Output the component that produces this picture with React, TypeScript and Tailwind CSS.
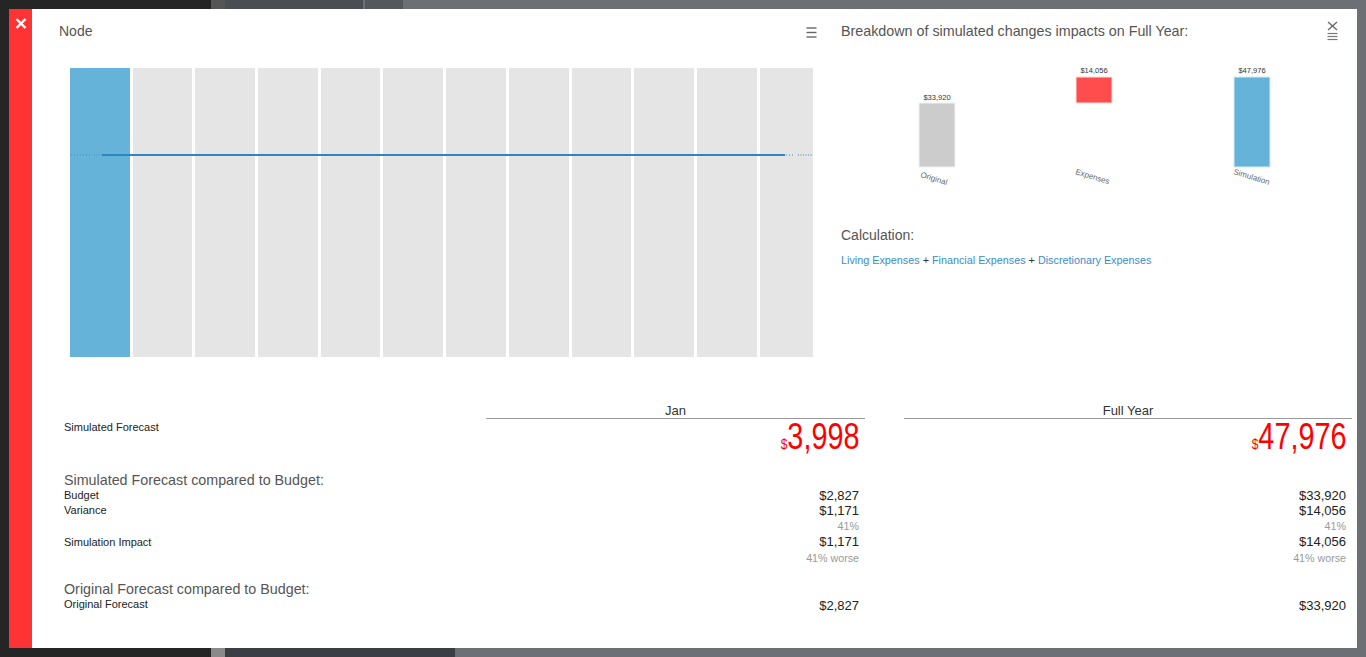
import React from "react";

function Hamburger() {
  return (
    <svg width="11" height="11" viewBox="0 0 11 11">
      <line x1="0.5" y1="1" x2="10.5" y2="1" stroke="#666" strokeWidth="1.4" />
      <line x1="0.5" y1="5.5" x2="10.5" y2="5.5" stroke="#666" strokeWidth="1.4" />
      <line x1="0.5" y1="10" x2="10.5" y2="10" stroke="#666" strokeWidth="1.4" />
    </svg>
  );
}

function NodeChart() {
  const cols = Array.from({ length: 12 }, (_, i) => i);
  return (
    <div className="relative w-[743px] h-[289px] overflow-hidden flex gap-[3px]">
      {cols.map((i) => (
        <div
          key={i}
          className={
            i === 0
              ? "flex-none w-[59.7px] h-full bg-[#66b3d9]"
              : "flex-none w-[59.7px] h-full bg-[#e5e5e5]"
          }
        />
      ))}
      <svg className="absolute inset-0" width="743" height="289" viewBox="0 0 743 289">
        <line x1="1" y1="87" x2="20" y2="87" stroke="#3a8cc2" strokeWidth="1.2" strokeDasharray="1 2" />
        <line x1="24" y1="87" x2="32" y2="87" stroke="#3a8cc2" strokeWidth="1.2" strokeDasharray="1 1.5" />
        <line x1="32" y1="87" x2="715" y2="87" stroke="#2f86bf" strokeWidth="2" />
        <line x1="716" y1="87" x2="724" y2="87" stroke="#3a8cc2" strokeWidth="1.2" strokeDasharray="1 2" />
        <line x1="728" y1="87" x2="743" y2="87" stroke="#3a8cc2" strokeWidth="1.2" strokeDasharray="1 1.5" />
      </svg>
    </div>
  );
}

function BreakdownChart() {
  return (
    <svg width="515" height="135" viewBox="0 0 515 135" className="block">
      <rect x="78" y="48" width="36" height="64" fill="#cccccc" stroke="#f2f2f2" strokeWidth="1" />
      <rect x="235" y="22" width="36" height="26" fill="#ff4d4d" stroke="#fde0e0" strokeWidth="1" />
      <rect x="393" y="22" width="36" height="90" fill="#66b3d9" stroke="#d6ecf6" strokeWidth="1" />
      <g fontFamily="Liberation Sans, Arial, sans-serif" fontSize="7.5" fill="#333" textAnchor="middle">
        <text x="96" y="44.5">$33,920</text>
        <text x="253" y="18">$14,056</text>
        <text x="411" y="18">$47,976</text>
      </g>
      <g fontFamily="Liberation Sans, Arial, sans-serif" fontSize="8" fill="#666">
        <text x="79" y="122" transform="rotate(17 79 122)">Original</text>
        <text x="234" y="119" transform="rotate(17 234 119)">Expenses</text>
        <text x="392" y="119" transform="rotate(17 392 119)">Simulation</text>
      </g>
    </svg>
  );
}

function Row({
  label,
  jan,
  fy,
  h,
  labelClass,
  valueClass,
}: {
  label?: string;
  jan: string;
  fy: string;
  h: string;
  labelClass: string;
  valueClass: string;
}) {
  return (
    <div className={`flex ${h}`}>
      <div className={`w-[422px] flex-none ${labelClass}`}>{label}</div>
      <div className={`w-[379px] flex-none text-right pr-[6px] ${valueClass}`}>{jan}</div>
      <div className="w-[39px] flex-none" />
      <div className={`w-[448px] flex-none text-right pr-[6px] ${valueClass}`}>{fy}</div>
    </div>
  );
}

function BigNumber({ value }: { value: string }) {
  return (
    <span className="inline-block origin-right scale-x-[0.8] text-[#ff0000]">
      <span className="text-[15px]">$</span>
      <span>{value}</span>
    </span>
  );
}

export default function App() {
  return (
    <div className="relative w-[1366px] h-[657px] overflow-hidden bg-[#6c7074] font-['Liberation_Sans',Arial,sans-serif]">
      {/* background app */}
      <div className="flex h-full">
        <div className="w-[211px] h-full bg-[#252525] flex-none" />
        <div className="w-[14px] h-full flex-none flex flex-col">
          <div className="h-[9px] bg-[#555]" />
          <div className="flex-1 bg-[#4e4e4e]" />
          <div className="h-[10px] bg-[#8a8a8a]" />
        </div>
        <div className="flex-1 h-full flex flex-col">
          <div className="h-[9px] flex">
            <div className="w-[138px] bg-[#4a4e52]" />
            <div className="w-[2px]" />
            <div className="w-[38px] bg-[#54585c]" />
          </div>
          <div className="flex-1" />
          <div className="h-[10px] flex">
            <div className="w-[230px] bg-[#3b3f43]" />
          </div>
        </div>
      </div>

      {/* modal */}
      <div className="absolute left-[9px] top-[9px] w-[1348px] h-[639px] flex">
        <div className="w-[23px] flex-none bg-[#ff3333] flex justify-center pt-[9px]">
          <svg width="12" height="11" viewBox="0 0 12 11">
            <line x1="1.5" y1="1" x2="10.5" y2="10" stroke="#fff" strokeWidth="2.4" />
            <line x1="10.5" y1="1" x2="1.5" y2="10" stroke="#fff" strokeWidth="2.4" />
          </svg>
        </div>
        <div className="relative flex-1 bg-white flex flex-col">
          {/* close + menu top right */}
          <div className="absolute left-[1295px] top-[12px] flex flex-col items-center">
            <svg width="11" height="10" viewBox="0 0 11 10">
              <line x1="1" y1="1" x2="10" y2="9" stroke="#666" strokeWidth="1.3" />
              <line x1="10" y1="1" x2="1" y2="9" stroke="#666" strokeWidth="1.3" />
            </svg>
            <svg width="11" height="9" viewBox="0 0 11 9" className="mt-[1px]">
              <line x1="0.5" y1="1.5" x2="10.5" y2="1.5" stroke="#777" strokeWidth="1.2" />
              <line x1="0.5" y1="4.5" x2="10.5" y2="4.5" stroke="#777" strokeWidth="1.2" />
              <line x1="0.5" y1="7.5" x2="10.5" y2="7.5" stroke="#777" strokeWidth="1.2" />
            </svg>
          </div>

          {/* top section */}
          <div className="flex h-[394px] flex-none">
            <div className="w-[790px] flex-none flex flex-col">
              <div className="flex items-center justify-between pl-[27px] pr-[5px] pt-[13px]">
                <span className="text-[14px] leading-[18px] text-[#555]">Node</span>
                <div className="mt-[3px]">
                  <Hamburger />
                </div>
              </div>
              <div className="ml-[38px] mt-[28px]">
                <NodeChart />
              </div>
            </div>
            <div className="flex-1 pl-[19px] flex flex-col">
              <div className="pt-[13px] text-[14.3px] leading-[18px] text-[#555]">
                Breakdown of simulated changes impacts on Full Year:
              </div>
              <div className="mt-[15px]">
                <BreakdownChart />
              </div>
              <div className="mt-[36px] text-[14px] leading-[18px] text-[#555]">Calculation:</div>
              <div className="mt-[9px] text-[10.8px] leading-[14px] text-[#333]">
                <span className="text-[#3a8ccc]">Living Expenses</span> +{" "}
                <span className="text-[#3a8ccc]">Financial Expenses</span> +{" "}
                <span className="text-[#3a8ccc]">Discretionary Expenses</span>
              </div>
            </div>
          </div>

          {/* table */}
          <div className="pl-[32px] flex flex-col">
            <div className="flex h-[16px]">
              <div className="w-[422px] flex-none" />
              <div className="w-[379px] flex-none border-b border-[#999] text-center text-[13px] leading-[15px] text-[#333]">
                Jan
              </div>
              <div className="w-[39px] flex-none" />
              <div className="w-[448px] flex-none border-b border-[#999] text-center text-[13px] leading-[15px] text-[#333]">
                Full Year
              </div>
            </div>
            <div className="flex h-[36px]">
              <div className="w-[422px] flex-none pt-[1px] text-[11px] leading-[14px] text-[#222]">
                Simulated Forecast
              </div>
              <div className="w-[379px] flex-none text-right pr-[6px] text-[36px] leading-[36px]">
                <BigNumber value="3,998" />
              </div>
              <div className="w-[39px] flex-none" />
              <div className="w-[448px] flex-none text-right pr-[6px] text-[36px] leading-[36px]">
                <BigNumber value="47,976" />
              </div>
            </div>

            <div className="mt-[17px] h-[16px] text-[14.3px] leading-[16px] text-[#555]">
              Simulated Forecast compared to Budget:
            </div>
            <Row
              label="Budget"
              jan="$2,827"
              fy="$33,920"
              h="h-[15px]"
              labelClass="text-[11px] leading-[15px] text-[#222]"
              valueClass="text-[13px] leading-[15px] text-[#222]"
            />
            <Row
              label="Variance"
              jan="$1,171"
              fy="$14,056"
              h="h-[15px]"
              labelClass="text-[11px] leading-[15px] text-[#222]"
              valueClass="text-[13px] leading-[15px] text-[#222]"
            />
            <Row
              jan="41%"
              fy="41%"
              h="h-[16px]"
              labelClass=""
              valueClass="text-[10.7px] leading-[16px] text-[#999]"
            />
            <Row
              label="Simulation Impact"
              jan="$1,171"
              fy="$14,056"
              h="h-[16px]"
              labelClass="text-[11px] leading-[16px] text-[#222]"
              valueClass="text-[13px] leading-[16px] text-[#222]"
            />
            <Row
              jan="41% worse"
              fy="41% worse"
              h="h-[16px]"
              labelClass=""
              valueClass="text-[10.7px] leading-[16px] text-[#999]"
            />

            <div className="mt-[15px] h-[16px] text-[14.3px] leading-[16px] text-[#555]">
              Original Forecast compared to Budget:
            </div>
            <Row
              label="Original Forecast"
              jan="$2,827"
              fy="$33,920"
              h="h-[16px]"
              labelClass="text-[11px] leading-[15px] text-[#222]"
              valueClass="text-[13px] leading-[17px] text-[#222]"
            />
          </div>
        </div>
      </div>
    </div>
  );
}
